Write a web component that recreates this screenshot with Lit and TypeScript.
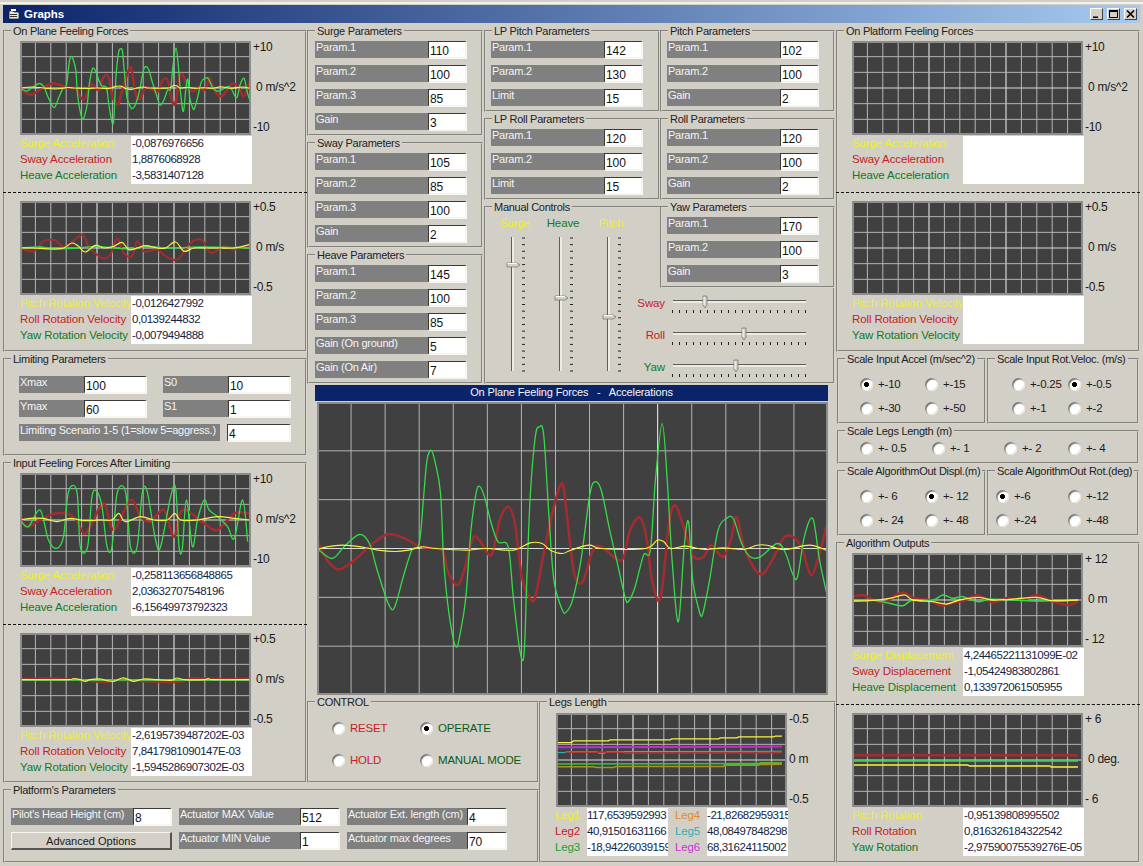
import { LitElement, html, css, svg } from "lit";
import { customElement } from "lit/decorators.js";

type Trace = { pts: string; color: string; w?: number; line?: boolean };

const R = "#a42c30", G = "#34dc48", Y = "#f4f440";

const bigGreen = "20,505 65,535 100,500 145,463 175,490 195,560 215,625 235,680 250,680 275,590 300,510 322,490 335,350 345,240 358,210 370,250 385,340 395,550 410,700 430,800 445,750 460,650 475,450 490,340 500,318 515,350 535,430 555,485 585,500 600,650 620,815 632,820 640,600 650,350 665,170 677,140 690,165 705,400 720,600 745,690 757,695 775,660 800,540 825,350 840,305 860,330 885,450 910,560 930,650 940,665 960,620 985,525 1005,510 1020,300 1040,130 1055,300 1070,550 1088,725 1105,500 1118,425 1130,600 1150,695 1160,700 1180,600 1205,450 1230,415 1250,415 1275,490 1300,530 1330,530 1380,490 1405,520 1425,580 1440,590 1460,470 1485,415 1505,540 1525,635";
const bigRed = "20,480 50,540 85,568 130,540 185,490 230,462 280,475 325,500 390,510 405,570 435,615 455,570 480,475 500,480 535,525 560,420 585,380 605,430 625,590 650,655 665,650 690,520 720,380 745,310 760,420 780,580 805,605 835,510 860,500 920,540 945,450 975,412 995,480 1010,600 1035,655 1060,430 1078,375 1100,430 1130,525 1160,532 1185,495 1220,530 1245,470 1260,410 1285,510 1330,582 1365,540 1400,472 1430,472 1455,510 1480,585 1505,520 1525,440";
const bigYellow = "20,508 50,500 95,495 150,500 200,510 250,514 290,510 330,500 370,505 460,510 520,505 600,510 650,488 685,490 710,510 745,520 770,510 825,495 860,505 990,505 1025,480 1045,485 1065,505 1110,498 1165,508 1220,503 1280,508 1320,495 1350,495 1400,508 1475,495 1525,510";
const accelTraces: Trace[] = [
  { pts: bigRed, color: R, w: 2.5 },
  { pts: bigGreen, color: G, w: 1.3 },
  { pts: bigYellow, color: Y, w: 1.1 },
];
const velTraces: Trace[] = [
  { pts: "60,745 100,755 130,725 165,722 195,742 245,705 265,740 305,775 330,765 350,715 370,760 395,770 410,725 430,755 470,750 495,770 530,780 560,740 580,722 605,722 630,760 670,740 700,750 745,735", color: R, w: 2 },
  { pts: "60,745 120,742 160,748 230,745 290,740 340,745 400,748 440,740 500,745 600,742 745,745", color: G, w: 1.3 },
  { pts: "60,745 100,745 150,748 190,745 215,730 235,740 255,757 285,737 310,745 340,740 365,728 385,750 410,745 435,738 470,745 495,745 525,727 550,755 580,745 620,745 660,745 700,745 745,735", color: Y, w: 1.2 },
];
const limTraces: Trace[] = [
  { pts: "60,495 80,530 120,510 170,490 220,500 250,550 270,530 310,460 340,540 390,450 420,500 450,515 490,480 520,560 545,480 610,520 650,540 700,490 745,490", color: R, w: 2.5 },
  { pts: "60,510 85,530 120,480 145,570 170,595 190,560 205,425 230,425 240,590 262,590 275,440 290,425 305,470 320,590 335,590 350,430 375,425 390,590 410,590 425,430 440,425 465,570 480,590 510,440 525,415 535,590 545,595 557,450 575,590 590,510 610,450 625,480 650,500 680,530 700,565 725,450 740,575", color: G, w: 1.3 },
  { pts: "60,510 90,505 130,505 170,515 210,505 250,512 300,510 335,510 355,490 375,515 420,500 460,510 500,510 522,490 540,510 590,510 650,500 700,505 745,510", color: Y, w: 1.2 },
];
const limVelTraces: Trace[] = [
  { pts: "60,178 130,176 190,177 310,188 350,182 490,188 540,186 570,176 620,176 680,178 745,176", color: R, w: 2 },
  { pts: "60,181 745,181", color: G, w: 1.3, line: true },
  { pts: "65,180 200,180 220,177 240,180 255,185 270,180 300,178 320,183 340,185 365,175 385,180 400,185 430,178 470,180 510,182 530,175 550,180 610,180 622,177 640,180 745,180", color: Y, w: 1.2 },
];
const dispTraces: Trace[] = [
  { pts: "50,170 80,165 110,178 145,188 180,165 205,158 235,175 280,180 315,197 345,188 385,182 420,165 445,175 470,188 510,175 560,180 600,165 640,180 690,195 725,185", color: R, w: 2.5 },
  { pts: "50,180 110,180 160,190 200,197 230,180 290,180 320,165 350,175 380,170 425,185 470,178 600,183 725,180", color: G, w: 1.5 },
  { pts: "50,183 100,182 160,175 205,165 230,180 290,185 330,192 370,180 425,172 470,180 520,178 600,172 650,182 725,180", color: Y, w: 1.3 },
];
const rotTraces: Trace[] = [
  { pts: "48,645 725,645", color: R, w: 2.5, line: true },
  { pts: "48,662 725,662", color: G, w: 1.3, line: true },
  { pts: "48,674 395,674 400,677 640,677 645,680 725,680", color: Y, w: 1.3, line: true },
];
const legTraces: Trace[] = [
  { pts: "50,158 95,158 100,153 205,153 210,150 390,150 395,147 535,147 540,144 590,144 595,141 700,141 705,139 725,139", color: Y, w: 1.3, line: true },
  { pts: "50,172 725,170", color: "#c030c8", w: 2, line: true },
  { pts: "50,188 75,188 80,185 170,185 175,190 195,190 200,185 725,184", color: "#30b8c0", line: true },
  { pts: "80,187 250,187 255,189 725,188", color: "#b03838", w: 1.5, line: true },
  { pts: "50,222 725,220", color: "#30c840", w: 1.5, line: true },
  { pts: "50,230 160,230 170,232 220,232 230,229 550,229 555,224 725,223", color: "#b09020", w: 1.5, line: true },
  { pts: "550,225 655,225 660,219 725,219", color: "#60b030", w: 2, line: true },
];

function pathOf(t: Trace): string {
  const p = t.pts.split(" ").map((s) => s.split(",").map(Number));
  if (t.line) return "M" + p.map((q) => q.join(" ")).join("L");
  let d = `M${p[0][0]} ${p[0][1]}`;
  for (let i = 0; i < p.length - 1; i++) {
    const a = p[Math.max(0, i - 1)], b = p[i], c = p[i + 1], e = p[Math.min(p.length - 1, i + 2)];
    const c1x = b[0] + (c[0] - a[0]) / 6, c1y = b[1] + (c[1] - a[1]) / 6;
    const c2x = c[0] - (e[0] - b[0]) / 6, c2y = c[1] - (e[1] - b[1]) / 6;
    d += `C${c1x.toFixed(1)} ${c1y.toFixed(1)} ${c2x.toFixed(1)} ${c2y.toFixed(1)} ${c[0]} ${c[1]}`;
  }
  return d;
}

function chart(vb: [number, number, number, number], traces: Trace[], cls = "mini") {
  const [x0, y0, w, h] = vb;
  const isBig = cls === "big";
  const vs = Array.from({ length: 14 }, (_, i) => i + 1);
  const hs = Array.from({ length: 5 }, (_, i) => i + 1);
  return html`<svg class="chart ${cls}" viewBox="${x0} ${y0} ${w} ${h}" preserveAspectRatio="none">
    ${vs.map((i) => {
      const x = x0 + (i * w) / 15;
      const bright = i === 10 || (!isBig && i === 5);
      return svg`<line x1=${x} x2=${x} y1=${y0} y2=${y0 + h} stroke=${bright ? "#f4f4f4" : "#b4b4b4"} stroke-width="1" vector-effect="non-scaling-stroke"></line>`;
    })}
    ${hs.map((j) => {
      const y = y0 + (j * h) / 6;
      return svg`<line x1=${x0} x2=${x0 + w} y1=${y} y2=${y} stroke=${j === 3 ? "#dcdcdc" : "#b4b4b4"} stroke-width="1" vector-effect="non-scaling-stroke"></line>`;
    })}
    ${traces.map((t) => svg`<path d=${pathOf(t)} fill="none" stroke=${t.color} stroke-width=${t.w ?? 1} vector-effect="non-scaling-stroke"></path>`)}
  </svg>`;
}

function vslider(label: string, cls: string, pos: number) {
  const ticks = Array.from({ length: 21 }, (_, i) => i * 6.65);
  return html`<div class="vs">
    <span class="vs-label ${cls}">${label}</span>
    <svg width="48" height="136" viewBox="0 0 48 136">
      <rect x="20" y="0" width="3" height="134" fill="#ecebe6"></rect>
      <line x1="20.5" x2="20.5" y1="0" y2="134" stroke="#5f5d58"></line>
      ${ticks.map((y) => svg`<line x1="31" x2="34" y1=${y + 1} y2=${y + 1} stroke="#222"></line>`)}
      <path d=${`M16 ${pos - 2}H26L29 ${pos}L26 ${pos + 2}H16Z`} fill="#d4d0c8" stroke="#6e6c66" stroke-width="0.7"></path>
      <line x1="16.5" x2="26" y1=${pos - 1.5} y2=${pos - 1.5} stroke="#fff"></line>
    </svg>
  </div>`;
}

function hslider(label: string, cls: string, pos: number) {
  const ticks = Array.from({ length: 20 }, (_, i) => 2 + i * 7);
  return html`<div class="hs">
    <span class="hs-label ${cls}">${label}</span>
    <svg width="140" height="24" viewBox="0 0 140 24">
      <rect x="3" y="7" width="133" height="3" fill="#ecebe6"></rect>
      <line x1="3" x2="136" y1="7.5" y2="7.5" stroke="#5f5d58"></line>
      ${ticks.map((x) => svg`<line x1=${x + 0.5} x2=${x + 0.5} y1="17" y2="20" stroke="#222"></line>`)}
      <path d=${`M${pos - 2} 3H${pos + 2}V12L${pos} 15L${pos - 2} 12Z`} fill="#d4d0c8" stroke="#6e6c66" stroke-width="0.7"></path>
      <line x1=${pos - 1} x2=${pos - 1} y1="4" y2="12" stroke="#fff"></line>
    </svg>
  </div>`;
}

const radio = (text: string, on = false, cls = "") =>
  html`<label class="radio ${cls}"><i class=${on ? "dot on" : "dot"}></i><span>${text}</span></label>`;

const tb = (v: string, cls = "") => html`<input class="tb ${cls}" readonly value=${v} />`;

const param = (label: string, v: string) =>
  html`<div class="prow"><span class="bar">${label}</span>${tb(v)}</div>`;

function paramFrame(title: string, rows: [string, string][], cls: string) {
  return html`<fieldset class="pf ${cls}">
    <legend>${title}</legend>
    <div class="pbody">${rows.map(([l, v]) => param(l, v))}</div>
  </fieldset>`;
}

function dataRows(rows: [string, string, string][]) {
  return html`<div class="data">
    <div class="dl">${rows.map(([l, c]) => html`<span class=${c}>${l}</span>`)}</div>
    <div class="dv">${rows.map(([, , v]) => html`<span>${v}</span>`)}</div>
  </div>`;
}

function scope(axis: [string, string, string], vb: [number, number, number, number], traces: Trace[], rows: [string, string, string][]) {
  return html`<div class="scope">
    <div class="chart-row">
      ${chart(vb, traces)}
      <div class="axis"><span>${axis[0]}</span><span class="mid">${axis[1]}</span><span>${axis[2]}</span></div>
    </div>
    ${dataRows(rows)}
  </div>`;
}

const scaleFrame = (title: string, cls: string, items: [string, boolean][]) => html`<fieldset class="sf ${cls}">
  <legend>${title}</legend>
  <div class="sbody">${items.map(([t, on]) => radio(t, on))}</div>
</fieldset>`;

const VB_ACC: [number, number, number, number] = [20, 65, 1510, 880];

@customElement("app-root")
export class AppRoot extends LitElement {
  static styles = css`
    :host {
      display: block;
      width: 1143px;
      height: 866px;
      overflow: hidden;
      background: #d2cfc7;
      font-family: "Liberation Sans", Arial, sans-serif;
      font-size: 11.5px;
      letter-spacing: -0.12px;
      color: #1a1a1a;
    }
    * { box-sizing: border-box; }
    .win { padding: 5px 3px 0; }
    .topline { height: 2px; margin: -3px -3px 1px; background: #f0f0ee; }
    .title {
      height: 18px;
      background: linear-gradient(90deg, #0a246a, #a6caf0);
      display: flex;
      align-items: center;
      padding: 0 3px 0 5px;
      color: #fff;
      font-weight: 700;
      font-size: 11.5px;
      letter-spacing: 0;
      gap: 3px;
    }
    .title .name { flex: 1; }
    .wb { display: flex; }
    .wbtn {
      width: 13px; height: 12px; margin-left: 4px;
      background: #d4d0c8;
      border: 1px solid; border-color: #fff #404040 #404040 #fff;
      display: block;
    }
    .body { display: flex; margin-top: 1px; }
    .main {
      width: 833px;
      display: grid;
      grid-template-columns: 304px 232px 297px;
      grid-template-rows: 671px 88px 80px;
    }
    .left { grid-area: 1 / 1 / 3 / 2; display: flex; flex-direction: column; }
    .center { grid-area: 1 / 2 / 2 / 4; }
    .control { grid-area: 2 / 2 / 3 / 3; }
    .legs { grid-area: 2 / 3 / 4 / 4; }
    .platform { grid-area: 3 / 1 / 4 / 3; }
    .right { width: 304px; display: flex; flex-direction: column; }

    fieldset {
      margin: 0; padding: 0; min-width: 0; display: block;
      border: 2px groove #d8d5cd;
    }
    legend {
      margin-left: 6px; padding: 0 2px;
      line-height: 14px; height: 14px;
      font-size: 11px; letter-spacing: -0.28px;
      white-space: nowrap;
      color: #222;
    }

    .f1 { height: 328px; }
    .f2 { height: 104px; }
    .f3 { height: 327px; }
    .scopes { padding: 3px 0 0 15px; }
    .right .scopes { padding-left: 14px; }
    .dash { border-top: 1px dashed #111; margin: 8px -2px 8px -17px; height: 0; }
    .right .dash { margin-left: -16px; }
    .chart-row { display: grid; grid-template-columns: 231px auto; }
    .chart {
      display: block;
      background: #404040;
      outline: 2px solid #8c8c8c;
      outline-offset: -2px;
      overflow: hidden;
    }
    .mini { width: 231px; height: 94px; }
    .big { width: 511px; height: 293px; margin: 1px 0 0 2px; }
    .axis {
      height: 94px; margin-top: -1px; padding-left: 2px;
      display: flex; flex-direction: column; justify-content: space-between;
      line-height: 14px; font-size: 12px; letter-spacing: -0.3px; white-space: nowrap;
    }
    .axis .mid { padding-left: 3px; }
    .data { display: grid; grid-template-columns: 111px 121px; margin-top: 1px; line-height: 14px; }
    .dl, .dv { display: grid; grid-auto-rows: 16px; }
    .dl { white-space: nowrap; min-width: 0; }
    .dv { position: relative; background: #fff; color: #14233f; padding-left: 1px; height: 48px; white-space: nowrap; letter-spacing: -0.45px; }
    .yl { color: #eeee30; }
    .rd { color: #c42026; }
    .gn { color: #117a22; }

    .lim { padding: 10px 0 0 14px; display: grid; gap: 7px; }
    .lim2 { display: grid; grid-template-columns: 128px 128px; gap: 16px; }
    .lrow { display: grid; grid-template-columns: 65px 63px; height: 17px; }
    .lrow3 { display: grid; grid-template-columns: 201px 64px; gap: 7px; height: 17px; }

    .bar {
      display: block; height: 17px; line-height: 12px; padding-left: 1px;
      font-size: 11px; letter-spacing: -0.25px;
      background: #808080; color: #f4f4f4; white-space: nowrap; overflow: hidden;
    }
    .tb {
      display: block; width: 100%; height: 18px; margin: 0;
      border: 2px solid; border-color: #3a3a3a #f6f6f2 #f6f6f2 #3a3a3a;
      border-width: 1px 2px 2px 1px;
      background: #fff; padding: 2px 0 0 1px;
      font: inherit; font-size: 12px; letter-spacing: -0.1px; color: #111; outline: none;
    }

    .params { display: grid; grid-template-columns: 177px 351px; height: 360px; }
    .pcol { display: flex; flex-direction: column; }
    .pf.a { width: 176px; }
    .pf.a .pbody { padding-left: 6px; }
    .pf.h4 { height: 112px; }
    .pf.h5 { height: 136px; }
    .pf.h3 { height: 88px; }
    .pbody { padding: 3px 0 0 5px; display: grid; gap: 7px; }
    .prow { display: grid; grid-template-columns: 113px 39px; height: 17px; }
    .pgrid { display: grid; grid-template-columns: 176px 175px; grid-template-rows: 88px 88px 184px; }
    .mwrap { grid-column: 1 / 3; display: grid; }
    .manual { grid-area: 1 / 1; height: 184px; }
    .yaw { grid-area: 1 / 1; justify-self: end; align-self: start; width: 175px; background: #d2cfc7; }
    .mbody { display: flex; height: 168px; padding-left: 5px; }
    .vs { width: 48px; display: flex; flex-direction: column; align-items: center; padding-top: 2px; }
    .vs-label { line-height: 14px; height: 14px; margin-bottom: 7px; }
    .vs svg, .hs svg { display: block; }
    .hsl { align-self: flex-end; margin: 0 0 1px 0; display: grid; gap: 8px; }
    .hs { display: flex; height: 24px; }
    .hs-label { width: 30px; text-align: right; line-height: 20px; }
    .hs svg { margin-left: 5px; }

    .blue {
      margin: 1px 0 0 8px; width: 513px; height: 16px;
      background: #0a246a; color: #f4f4f4; text-align: center; line-height: 14px;
      font-size: 11px; letter-spacing: -0.15px;
    }
    .centerChart { margin-left: 8px; }

    .radio { display: flex; align-items: center; gap: 5px; height: 13px; line-height: 13px; white-space: nowrap; font-size: 11.5px; letter-spacing: -0.2px; }
    .dot {
      display: block; flex: none; width: 13px; height: 13px; border-radius: 50%;
      background: #fff;
      box-shadow: inset 1.5px 1.5px 1px #77756f, inset -1px -1px 1px #e9e7e1;
    }
    .dot.on { background: radial-gradient(circle, #000 2.2px, #fff 2.8px); }

    .ctl { padding: 13px 0 0 23px; display: grid; grid-template-columns: 88px auto; row-gap: 19px; }
    .control fieldset, .platform fieldset, .legs fieldset { height: 100%; }
    .control, .platform, .legs { min-height: 0; }
    .c-rd { color: #c81e24; }
    .c-gn { color: #0d5c20; }

    .legb { padding: 4px 0 0 15px; }
    .legdata {
      display: grid; grid-template-columns: 32px 81px 39px 81px;
      grid-auto-rows: 16px; margin: 1px 0 0 -1px; line-height: 14px; font-size: 11.5px;
    }
    .legdata b { font-weight: 400; background: #fff; color: #14233f; overflow: hidden; white-space: nowrap; letter-spacing: -0.45px; }
    .legdata .l2 { margin-left: 7px; }
    .c-l3 { color: #22a030; }
    .c-l4 { color: #e08a30; }
    .c-l5 { color: #2fb0b8; }
    .c-l6 { color: #d030d8; }

    .pl { padding: 11px 0 0 6px; display: grid; grid-template-columns: 161px 161px 160px; column-gap: 7px; row-gap: 7px; }
    .plr { display: grid; height: 17px; }
    .plr.a { grid-template-columns: 122px 39px; }
    .plr.b { grid-template-columns: 121px 40px; }
    .plr.c { grid-template-columns: 120px 40px; }
    .btn {
      height: 18px; width: 161px; margin: 0; padding: 0;
      background: #d4d0c8; font: inherit; font-size: 11px; color: #1a1a1a; line-height: 14px;
      border: 2px solid; border-color: #f4f4f0 #555 #555 #f4f4f0;
      border-width: 1px 2px 2px 1px;
    }

    .srow { display: flex; gap: 1px; padding-left: 1px; }
    .sf { height: 72px; }
    .sf.s1 { width: 149px; }
    .sf.s2 { width: 152px; }
    .sf.s3 { height: 40px; width: 302px; }
    .s3wrap { padding-left: 1px; }
    .sbody { display: grid; row-gap: 11px; padding-top: 12px; }
    .s1 .sbody { grid-template-columns: 65px 65px; padding-left: 21px; }
    .s2.rot .sbody { grid-template-columns: 56px 56px; padding-left: 23px; }
    .s2.deg .sbody { grid-template-columns: 72px 60px; padding-left: 7px; }
    .s3 .sbody { grid-template-columns: 72px 72px 64px 60px; padding: 4px 0 0 21px; }
  `;

  render() {
    const acc = (a: string, b: string, c: string): [string, string, string][] => [
      ["Surge Acceleration", "yl", a], ["Sway Acceleration", "rd", b], ["Heave Acceleration", "gn", c],
    ];
    const vel = (a: string, b: string, c: string): [string, string, string][] => [
      ["Pitch Rotation Velocity", "yl", a], ["Roll Rotation Velocity", "rd", b], ["Yaw Rotation Velocity", "gn", c],
    ];
    const empty: Trace[] = [];
    return html`<div class="win">
      <div class="topline"></div>
      <div class="title">
        <svg width="13" height="12" viewBox="0 0 13 12">
          <path d="M1 3h4l1 1h5v7H1z" fill="#e8e8e8" stroke="#222" stroke-width="0.8"></path>
          <path d="M3 1h5v2H3z" fill="#fff"></path>
          <path d="M2 6h7v1H2zM2 8h7v1H2z" fill="#333"></path>
        </svg>
        <span class="name">Graphs</span>
        <div class="wb">
          <span class="wbtn"><svg width="11" height="10" viewBox="0 0 11 10"><path d="M2 7.5h5v1.5H2z" fill="#000"></path></svg></span>
          <span class="wbtn"><svg width="11" height="10" viewBox="0 0 11 10"><path d="M1.5 1.5h8v7h-8z" fill="none" stroke="#000"></path><path d="M1 1h9v2H1z" fill="#000"></path></svg></span>
          <span class="wbtn"><svg width="11" height="10" viewBox="0 0 11 10"><path d="M2 1.5l7 7M9 1.5l-7 7" stroke="#000" stroke-width="1.6"></path></svg></span>
        </div>
      </div>
      <div class="body">
        <div class="main">
          <div class="left">
            <fieldset class="f1">
              <legend>On Plane Feeling Forces</legend>
              <div class="scopes">
                ${scope(["+10", "0 m/s^2", "-10"], VB_ACC, accelTraces, acc("-0,0876976656", "1,8876068928", "-3,5831407128"))}
                <div class="dash"></div>
                ${scope(["+0.5", "0 m/s", "-0.5"], [60, 604, 690, 282], velTraces, vel("-0,0126427992", "0,0139244832", "-0,0079494888"))}
              </div>
            </fieldset>
            <fieldset class="f2">
              <legend>Limiting Parameters</legend>
              <div class="lim">
                <div class="lim2">
                  <div class="lrow"><span class="bar">Xmax</span>${tb("100")}</div>
                  <div class="lrow"><span class="bar">S0</span>${tb("10")}</div>
                </div>
                <div class="lim2">
                  <div class="lrow"><span class="bar">Ymax</span>${tb("60")}</div>
                  <div class="lrow"><span class="bar">S1</span>${tb("1")}</div>
                </div>
                <div class="lrow3"><span class="bar">Limiting Scenario 1-5 (1=slow 5=aggress.)</span>${tb("4")}</div>
              </div>
            </fieldset>
            <fieldset class="f3">
              <legend>Input Feeling Forces After Limiting</legend>
              <div class="scopes">
                ${scope(["+10", "0 m/s^2", "-10"], [60, 369, 690, 282], limTraces, acc("-0,258113656848865", "2,03632707548196", "-6,15649973792323"))}
                <div class="dash"></div>
                ${scope(["+0.5", "0 m/s", "-0.5"], [60, 40, 690, 282], limVelTraces, vel("-2,6195739487202E-03", "7,8417981090147E-03", "-1,5945286907302E-03"))}
              </div>
            </fieldset>
          </div>

          <div class="center">
            <div class="params">
              <div class="pcol">
                ${paramFrame("Surge Parameters", [["Param.1", "110"], ["Param.2", "100"], ["Param.3", "85"], ["Gain", "3"]], "a h4")}
                ${paramFrame("Sway Parameters", [["Param.1", "105"], ["Param.2", "85"], ["Param.3", "100"], ["Gain", "2"]], "a h4")}
                ${paramFrame("Heave Parameters", [["Param.1", "145"], ["Param.2", "100"], ["Param.3", "85"], ["Gain (On ground)", "5"], ["Gain (On Air)", "7"]], "a h5")}
              </div>
              <div class="pgrid">
                ${paramFrame("LP Pitch Parameters", [["Param.1", "142"], ["Param.2", "130"], ["Limit", "15"]], "h3")}
                ${paramFrame("Pitch Parameters", [["Param.1", "102"], ["Param.2", "100"], ["Gain", "2"]], "h3")}
                ${paramFrame("LP Roll Parameters", [["Param.1", "120"], ["Param.2", "100"], ["Limit", "15"]], "h3")}
                ${paramFrame("Roll Parameters", [["Param.1", "120"], ["Param.2", "100"], ["Gain", "2"]], "h3")}
                <div class="mwrap">
                  <fieldset class="manual">
                    <legend>Manual Controls</legend>
                    <div class="mbody">
                      ${vslider("Surge", "yl", 28)}
                      ${vslider("Heave", "gn", 61)}
                      ${vslider("Pitch", "yl", 80)}
                      <div class="hsl">
                        ${hslider("Sway", "rd", 35)}
                        ${hslider("Roll", "rd", 74)}
                        ${hslider("Yaw", "gn", 66)}
                      </div>
                    </div>
                  </fieldset>
                  ${paramFrame("Yaw Parameters", [["Param.1", "170"], ["Param.2", "100"], ["Gain", "3"]], "h3 yaw")}
                </div>
              </div>
            </div>
            <div class="blue">On Plane Feeling Forces &nbsp;&nbsp;-&nbsp;&nbsp; Accelerations</div>
            <div class="centerChart">${chart(VB_ACC, accelTraces, "big")}</div>
          </div>

          <div class="control">
            <fieldset>
              <legend>CONTROL</legend>
              <div class="ctl">
                ${radio("RESET", false, "c-rd")}
                ${radio("OPERATE", true, "c-gn")}
                ${radio("HOLD", false, "c-rd")}
                ${radio("MANUAL MODE", false, "c-gn")}
              </div>
            </fieldset>
          </div>

          <div class="legs">
            <fieldset>
              <legend>Legs Length</legend>
              <div class="legb">
                <div class="chart-row">
                  ${chart([48, 70, 692, 280], legTraces)}
                  <div class="axis"><span>-0.5</span><span>0 m</span><span>-0.5</span></div>
                </div>
                <div class="legdata">
                  <span class="yl">Leg1</span><b>117,6539592993</b><span class="l2 c-l4">Leg4</span><b>-21,82682959315</b>
                  <span class="rd">Leg2</span><b>40,91501631166</b><span class="l2 c-l5">Leg5</span><b>48,08497848298</b>
                  <span class="c-l3">Leg3</span><b>-18,94226039159</b><span class="l2 c-l6">Leg6</span><b>68,31624115002</b>
                </div>
              </div>
            </fieldset>
          </div>

          <div class="platform">
            <fieldset>
              <legend>Platform's Parameters</legend>
              <div class="pl">
                <div class="plr a"><span class="bar">Pilot's Head Height (cm)</span>${tb("8")}</div>
                <div class="plr b"><span class="bar">Actuator MAX Value</span>${tb("512")}</div>
                <div class="plr c"><span class="bar">Actuator Ext. length (cm)</span>${tb("4")}</div>
                <button class="btn">Advanced Options</button>
                <div class="plr b"><span class="bar">Actuator MIN Value</span>${tb("1")}</div>
                <div class="plr c"><span class="bar">Actuator max degrees</span>${tb("70")}</div>
              </div>
            </fieldset>
          </div>
        </div>

        <div class="right">
          <fieldset class="f1">
            <legend>On Platform Feeling Forces</legend>
            <div class="scopes">
              ${scope(["+10", "0 m/s^2", "-10"], VB_ACC, empty, acc("", "", ""))}
              <div class="dash"></div>
              ${scope(["+0.5", "0 m/s", "-0.5"], [60, 604, 690, 282], empty, vel("", "", ""))}
            </div>
          </fieldset>
          <div class="srow">
            ${scaleFrame("Scale Input Accel (m/sec^2)", "s1", [["+-10", true], ["+-15", false], ["+-30", false], ["+-50", false]])}
            ${scaleFrame("Scale Input Rot.Veloc. (m/s)", "s2 rot", [["+-0.25", false], ["+-0.5", true], ["+-1", false], ["+-2", false]])}
          </div>
          <div class="s3wrap">
            ${scaleFrame("Scale Legs Length (m)", "s3", [["+- 0.5", false], ["+- 1", false], ["+- 2", false], ["+- 4", false]])}
          </div>
          <div class="srow">
            ${scaleFrame("Scale AlgorithmOut Displ.(m)", "s1", [["+- 6", false], ["+- 12", true], ["+- 24", false], ["+- 48", false]])}
            ${scaleFrame("Scale AlgorithmOut Rot.(deg)", "s2 deg", [["+-6", true], ["+-12", false], ["+-24", false], ["+-48", false]])}
          </div>
          <fieldset class="f3">
            <legend>Algorithm Outputs</legend>
            <div class="scopes">
              ${scope(["+ 12", "0 m", "- 12"], [48, 40, 692, 280], dispTraces, [
                ["Surge Displacement", "yl", "4,24465221131099E-02"],
                ["Sway Displacement", "rd", "-1,05424983802861"],
                ["Heave Displacement", "gn", "0,133972061505955"],
              ])}
              <div class="dash"></div>
              ${scope(["+ 6", "0 deg.", "- 6"], [48, 518, 692, 282], rotTraces, [
                ["Pitch Rotation", "yl", "-0,95139808995502"],
                ["Roll Rotation", "rd", "0,816326184322542"],
                ["Yaw Rotation", "gn", "-2,97590075539276E-05"],
              ])}
            </div>
          </fieldset>
        </div>
      </div>
    </div>`;
  }
}
